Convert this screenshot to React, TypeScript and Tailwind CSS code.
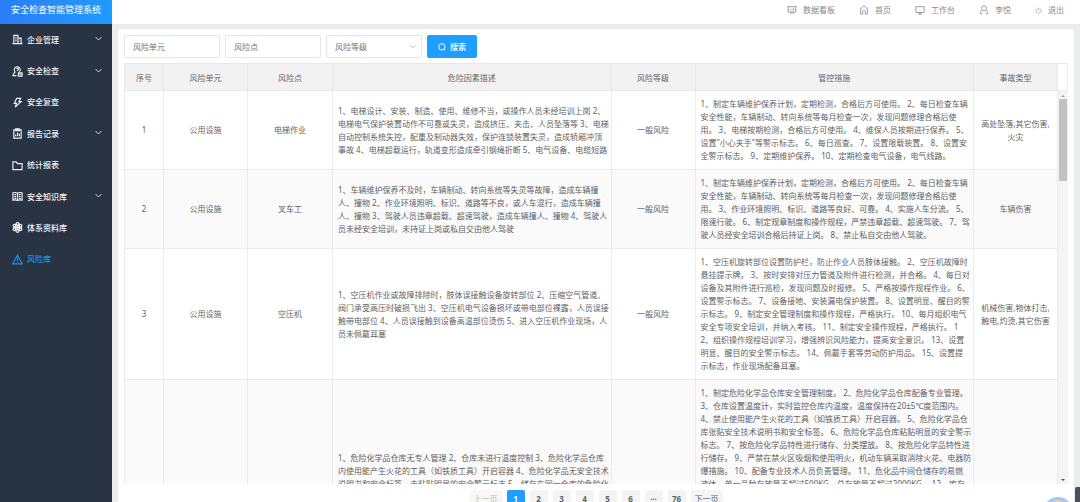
import type { ReactNode } from "react";
import clsx from "clsx";

type IconName =
  | "building"
  | "inspect"
  | "bolt"
  | "clipboard"
  | "folder"
  | "book"
  | "atom"
  | "warning"
  | "board"
  | "home"
  | "monitor"
  | "user"
  | "power"
  | "search"
  | "chevron";

// all icons share a 24x24 box and stroke with the current text colour
const icons: Record<IconName, ReactNode> = {
  building: (
    <>
      <path d="M4 21V3h9v18M13 9h7v12M1 21h22" />
      <path d="M7 7h3M7 11h3M7 15h3M16 13h1M16 17h1" />
    </>
  ),
  inspect: (
    <>
      <path d="M7 13a6.5 6.5 0 1 1 9 0" />
      <path d="M7 13c-3 2-5 4-5 8h8M10 6.5c1-1.500 4-1.500 4 .5s-2.500 1.500-2.500 4" />
      <path d="M14 15h8v7h-8zM16 18h4" />
    </>
  ),
  bolt: <path d="M10 3h9l-4 7h5L7 22l3-8H5z" />,
  clipboard: (
    <>
      <path d="M4 4h16v18H4z" />
      <path d="M8 2h8v4H8z" fill="currentColor" />
      <path d="M8 18v-4M12 18v-8M16 18v-6" />
    </>
  ),
  folder: <path d="M2 4h7l3 4h10v13H2z" />,
  book: (
    <>
      <path d="M12 5C9 3 5 3 2 4v16c3-1 7-1 10 1 3-2 7-2 10-1V4c-3-1-7-1-10 1z" />
      <path d="M12 5v16M5 8h4M5 12h4M5 16h4M15 8h4M15 12h4M15 16h4" />
    </>
  ),
  atom: (
    <>
      <ellipse cx="12" cy="12" rx="4.500" ry="10.500" />
      <ellipse cx="12" cy="12" rx="4.500" ry="10.500" transform="rotate(60 12 12)" />
      <ellipse cx="12" cy="12" rx="4.500" ry="10.500" transform="rotate(120 12 12)" />
      <circle cx="12" cy="12" r="2" fill="currentColor" />
    </>
  ),
  warning: (
    <>
      <path d="M12 2.500 22.500 21.500h-21z" />
      <path d="M12 9v7M12 18v1.500" />
    </>
  ),
  board: (
    <>
      <path d="M1 4h22M3 4v13h18V4M8 22l3-5M16 22l-3-5" />
      <path d="M8 13v-2M12 13V9M16 13V8" />
    </>
  ),
  home: <path d="M2 11 12 2l10 9M4 9.500V22h5v-7c0-3 6-3 6 0v7h5V9.500" />,
  monitor: <path d="M2 4h20v14H2zM12 18v4M7 22h10" />,
  user: (
    <>
      <circle cx="12" cy="8" r="6" />
      <path d="M8 13c-3 1-5 4-5 8h5M16 13c3 1 5 4 5 8h-5" />
    </>
  ),
  power: <path d="M12 2v10M7 5a9 9 0 1 0 10 0" />,
  search: (
    <>
      <circle cx="11.500" cy="11.500" r="9.500" />
      <path d="m17 18 3 4" />
    </>
  ),
  chevron: <path d="m2 7 10 10L22 7" />,
};

function Icon({ name, className }: { name: IconName; className?: string }) {
  return (
    <svg
      viewBox="0 0 24 24"
      fill="none"
      stroke="currentColor"
      className={clsx("shrink-0", className)}
      aria-hidden="true"
    >
      {icons[name]}
    </svg>
  );
}

const menu: { label: string; icon: IconName; children?: boolean; active?: boolean }[] = [
  { label: "企业管理", icon: "building", children: true },
  { label: "安全检查", icon: "inspect", children: true },
  { label: "安全复查", icon: "bolt" },
  { label: "报告记录", icon: "clipboard", children: true },
  { label: "统计报表", icon: "folder" },
  { label: "安全知识库", icon: "book", children: true },
  { label: "体系资料库", icon: "atom" },
  { label: "风险库", icon: "warning", active: true },
];

const topLinks: { label: string; icon: IconName }[] = [
  { label: "数据看板", icon: "board" },
  { label: "首页", icon: "home" },
  { label: "工作台", icon: "monitor" },
  { label: "李悦", icon: "user" },
  { label: "退出", icon: "power" },
];

const columns = ["序号", "风险单元", "风险点", "危险因素描述", "风险等级", "管控措施", "事故类型"];

const rows = [
  {
    unit: "公用设施",
    point: "电梯作业",
    level: "一般风险",
    hazard: `1、电梯设计、安装、制造、使用、维修不当，或操作人员未经培训上岗 2、
电梯电气保护装置动作不可靠或失灵，造成挤压、夹击、人员坠落等 3、电梯
自动控制系统失控，配重及制动器失效，保护连锁装置失灵，造成轿厢冲顶
事故 4、电梯超载运行，轨道变形造成牵引钢绳折断 5、电气设备、电缆短路`,
    measures: `1、制定车辆维护保养计划，定期检测，合格后方可使用。 2、每日检查车辆
安全性能，车辆制动、转向系统等每月检查一次，发现问题修理合格后使
用。 3、电梯按期检测，合格后方可使用。 4、维保人员按期进行保养。 5、
设置"小心夹手"等警示标志。 6、每日巡查。 7、设置限载装置。 8、设置安
全警示标志。 9、定期维护保养。 10、定期检查电气设备，电气线路。`,
    accident: "高处坠落,其它伤害,\n火灾",
  },
  {
    unit: "公用设施",
    point: "叉车工",
    level: "一般风险",
    hazard: `1、车辆维护保养不及时，车辆制动、转向系统等失灵等故障，造成车辆撞
人、撞物 2、作业环境照明、标识、道路等不良，或人车混行，造成车辆撞
人、撞物 3、驾驶人员违章超载、超速驾驶，造成车辆撞人、撞物 4、驾驶人
员未经安全培训，未持证上岗或私自交由他人驾驶`,
    measures: `1、制定车辆维护保养计划，定期检测，合格后方可使用。 2、每日检查车辆
安全性能，车辆制动、转向系统等每月检查一次，发现问题修理合格后使
用。 3、作业环境照明、标识、道路等良好、可靠。 4、实施人车分流。 5、
限速行驶。 6、制定规章制度和操作规程，严禁违章超载、超速驾驶。 7、驾
驶人员经安全培训合格后持证上岗。 8、禁止私自交由他人驾驶。`,
    accident: "车辆伤害",
  },
  {
    unit: "公用设施",
    point: "空压机",
    level: "一般风险",
    hazard: `1、空压机作业或故障排除时，肢体误接触设备旋转部位 2、压缩空气管道、
阀门承受高压时破损飞出 3、空压机电气设备损坏或带电部位裸露，人员误接
触带电部位 4、人员误接触到设备高温部位烫伤 5、进入空压机作业现场，人
员未佩戴耳塞`,
    measures: `1、空压机旋转部位设置防护栏，防止作业人员肢体接触。 2、空压机故障时
悬挂提示牌。 3、按时安排对压力管道及附件进行检测，并合格。 4、每日对
设备及其附件进行巡检，发现问题及时报修。 5、严格按操作规程作业。 6、
设置警示标志。 7、设备接地、安装漏电保护装置。 8、设置明显、醒目的警
示标志。 9、制定安全管理制度和操作规程，严格执行。 10、每月组织电气
安全专项安全培训，并纳入考核。 11、制定安全操作规程，严格执行。 1
2、组织操作规程培训学习，增强辨识风险能力，提高安全意识。 13、设置
明显、醒目的安全警示标志。 14、佩戴手套等劳动防护用品。 15、设置提
示标志，作业现场配备耳塞。`,
    accident: "机械伤害,物体打击,\n触电,灼烫,其它伤害",
  },
  {
    unit: "公用设施",
    point: "危化品仓库",
    level: "较大风险",
    hazard: `1、危险化学品仓库无专人管理 2、仓库未进行温度控制 3、危险化学品仓库
内使用能产生火花的工具（如铁质工具）开启容器 4、危险化学品无安全技术
说明书和安全标签，未粘贴明显的安全警示标志 5、储存在同一仓库的危险化
学品性质相互抵触，未分类摆放 6、在仓库内吸烟、使用明火 7、机动车辆未
采取消除火花措施进入仓库 8、未配备专业技术人员 9、易燃液体超量储存
10、库存物品未定期检查`,
    measures: `1、制定危险化学品仓库安全管理制度。 2、危险化学品仓库配备专业管理。
3、仓库设置温度计，实时监控仓库内温度，温度保持在20±5℃度范围内。
4、禁止使用能产生火花的工具（如铁质工具）开启容器。 5、危险化学品仓
库张贴安全技术说明书和安全标签。 6、危险化学品仓库粘贴明显的安全警示
标志。 7、按危险化学品特性进行储存、分类摆放。 8、按危险化学品特性进
行储存。 9、严禁在禁火区吸烟和使用明火，机动车辆采取消除火花、电器防
爆措施。 10、配备专业技术人员负责管理。 11、危化品中间仓储存的易燃
液体，单一品种存放量不超过500KG，总存放量不超过2000KG。 12、库存
物品定期检查，发现泄漏及时处理。 13、仓库保持良好通风。 14、配备足
够的消防器材。 15、设置防静电装置。 16、出入库登记。
17、搬运时轻拿轻放，严禁撞击。 18、作业人员佩戴防护用品。
19、仓库内使用防爆电器。 20、配备泄漏应急处理物资。
21、设置可燃气体报警装置。 22、仓库门口设置静电释放装置。
23、制定应急预案并定期演练。 24、作业人员经培训合格后上岗。
25、危险化学品双人双锁管理。 26、废弃物按规定处置。
27、每日巡查并记录。`,
    accident: "火灾,其它爆炸",
  },
];

const pages = ["1", "2", "3", "4", "5", "6", "···", "76"];

function Sidebar() {
  return (
    <aside className="w-28 shrink-0 bg-[#283343] text-white">
      <h1 className="flex h-6 items-center justify-center bg-linear-to-r from-[#2b7df5] to-[#1e9cff] pb-1 text-[9px]">
        安全检查智能管理系统
      </h1>
      <nav className="grid h-[251px] auto-rows-fr">
        {menu.map((item) => (
          <a
            key={item.label}
            href="#"
            className={clsx(
              "flex items-center pr-2 pl-3 text-[8px] font-medium",
              item.active ? "text-[#1e90f5]" : "text-[#eef1f4]",
            )}
          >
            <Icon name={item.icon} className="mr-1 size-[11px] stroke-[2.5]" />
            {item.label}
            {item.children && <Icon name="chevron" className="mr-0.5 mb-0.5 ml-auto size-[7px] stroke-3" />}
          </a>
        ))}
      </nav>
    </aside>
  );
}

function TopBar() {
  return (
    <header className="flex h-6 shrink-0 items-center justify-end gap-6 bg-white pr-4 pb-1 text-[8px] text-[#8a8a8a]">
      {topLinks.map((link) => (
        <a key={link.label} href="#" className="flex items-center gap-1.5">
          <Icon name={link.icon} className={clsx("stroke-2", link.icon === "power" ? "size-[7px]" : "size-[10px]")} />
          {link.label}
        </a>
      ))}
    </header>
  );
}

function SearchForm() {
  const field = "h-[23px] w-24 rounded-xs border border-[#e6e6e6] bg-white px-2 text-[8px] text-[#757575] placeholder:text-[#757575]";
  return (
    <form className="flex gap-[5px] pb-[5px]" onSubmit={(e) => e.preventDefault()}>
      <input aria-label="风险单元" placeholder="风险单元" className={field} />
      <input aria-label="风险点" placeholder="风险点" className={field} />
      <div className="relative flex">
        <select aria-label="风险等级" className={clsx(field, "appearance-none")}>
          <option>风险等级</option>
        </select>
        <Icon
          name="chevron"
          className="pointer-events-none absolute top-2 right-1.5 size-[7px] stroke-3 text-[#b5b5b5]"
        />
      </div>
      <button className="flex h-[23px] w-[50px] items-center justify-center gap-1 rounded-xs bg-[#1e9fff] text-[8px] font-medium text-white">
        <Icon name="search" className="size-2 stroke-3" />
        搜索
      </button>
    </form>
  );
}

function RiskTable() {
  return (
    <div className="flex min-h-0 flex-1 border-t border-l border-[#e9e9e9]">
      <div className="min-w-0 flex-1 overflow-hidden">
        <table className="w-full table-fixed border-separate border-spacing-0 text-center text-[8px] leading-[13px] text-[#5f5f5f]">
          <colgroup>
            <col className="w-[39px]" />
            <col className="w-[84px]" />
            <col className="w-[85px]" />
            <col />
            <col className="w-[84px]" />
            <col />
            <col className="w-[84px]" />
          </colgroup>
          <thead>
            <tr className="bg-[#f2f2f2] text-[#666]">
              {columns.map((c) => (
                <th key={c} className="h-[27px] border-r border-b border-[#e9e9e9] font-normal">
                  {c}
                </th>
              ))}
            </tr>
          </thead>
          <tbody>
            {rows.map((row, i) => (
              <tr
                key={i}
                className="even:bg-[#fafafa] [&>td]:border-r [&>td]:border-b [&>td]:border-[#ececec] [&>td]:pt-1.5 [&>td]:pb-[7px] [&>td]:whitespace-pre"
              >
                <td>{i + 1}</td>
                <td>{row.unit}</td>
                <td>{row.point}</td>
                <td className="pl-[5px] text-left">{row.hazard}</td>
                <td>{row.level}</td>
                <td className="pl-[5px] text-left">{row.measures}</td>
                <td>{row.accident}</td>
              </tr>
            ))}
          </tbody>
        </table>
      </div>
      <div className="flex w-[10px] shrink-0 flex-col items-center bg-[#f4f4f5]">
        <div className="h-[27px] w-full shrink-0 border-r border-b border-[#ececec] bg-white" />
        <svg viewBox="0 0 10 8" className="h-2 w-full shrink-0 fill-[#a0a0a0]">
          <path d="M3 6l2-2 2 2z" />
        </svg>
        <div className="h-[82px] w-2 bg-[#c1c1c1]" />
        <svg viewBox="0 0 10 8" className="mt-auto h-2 w-full fill-[#505050]">
          <path d="M3 3l2 2 2-2z" />
        </svg>
      </div>
    </div>
  );
}

function Pager() {
  const item = "h-[18px] shrink-0 rounded-xs";
  return (
    <nav className="flex h-[18px] shrink-0 justify-center gap-[5px] overflow-hidden pt-1.5 text-[8px]">
      <button disabled className={clsx(item, "w-8 bg-[#f7f7f7] text-[#bbb]")}>
        上一页
      </button>
      {pages.map((p) => (
        <button
          key={p}
          className={clsx(item, "w-[18px] font-bold", p === "1" ? "bg-[#1e9fff] text-white" : "bg-[#f4f4f5] text-[#606266]")}
        >
          {p}
        </button>
      ))}
      <button className={clsx(item, "w-8 bg-[#f4f4f5] text-[#606266]")}>下一页</button>
    </nav>
  );
}

export default function App() {
  return (
    <div className="relative flex h-screen overflow-hidden bg-[#ebecee] font-['Noto_Sans','Noto_Sans_CJK_SC',sans-serif]">
      <Sidebar />
      <div className="flex min-w-0 flex-1 flex-col">
        <TopBar />
        <main className="mt-[5px] mr-1.5 ml-1.5 flex min-h-0 flex-1 flex-col rounded-t-xs bg-white px-1.5 pt-1.5">
          <SearchForm />
          <RiskTable />
          <Pager />
        </main>
      </div>
      {/* floating assistant, half hidden below the fold */}
      <svg viewBox="0 0 30 30" className="absolute right-[7px] -bottom-[25px] size-[30px]">
        <circle cx="15" cy="15" r="15" fill="#a5c8f5" />
        <circle cx="15" cy="8" r="5" fill="#f3d96b" />
      </svg>
      <div className="absolute right-0 bottom-0 h-[15px] w-[5px] rounded-tl-xs bg-[#4b4f5a]" />
    </div>
  );
}
